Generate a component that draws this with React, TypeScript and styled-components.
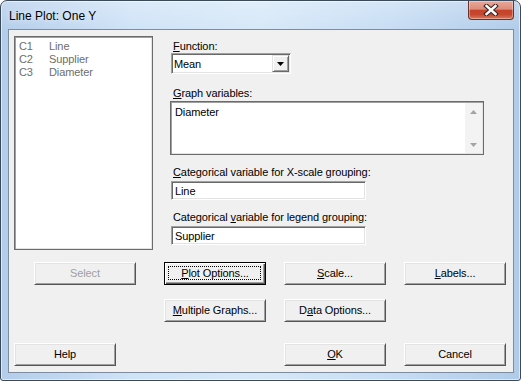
import React from "react";
import styled, { createGlobalStyle } from "styled-components";

const Global = createGlobalStyle`
  html, body { margin: 0; padding: 0; background: #ffffff; }
  * { box-sizing: border-box; }
`;

const Window = styled.div`
  width: 521px;
  height: 381px;
  display: flex;
  flex-direction: column;
  border: 1px solid #3b4a5a;
  border-radius: 7px 7px 3px 3px;
  padding: 0 6px 7px 7px;
  background:
    linear-gradient(to bottom, rgba(255, 255, 255, 0.25), rgba(255, 255, 255, 0) 30px),
    linear-gradient(to right, #b3cdea 0%, #cfe3f7 25%, #d6e8f8 50%, #c7ddf4 75%, #b0cbe9 100%);
  box-shadow: inset 0 0 0 1px rgba(255, 255, 255, 0.55);
  font-family: "Liberation Sans", Arial, sans-serif;
  overflow: hidden;
`;

const TitleBar = styled.div`
  height: 28px;
  display: flex;
  align-items: flex-start;
  flex: none;
`;

const Title = styled.div`
  padding: 7px 0 0 1px;
  font-family: "Liberation Sans", Arial, sans-serif;
  font-size: 12px;
  line-height: 16px;
  color: #000000;
  text-shadow: 0 0 6px rgba(255, 255, 255, 0.9);
`;

const CloseButton = styled.div`
  margin-left: auto;
  width: 46px;
  height: 19px;
  border: 1px solid #6a3228;
  border-top: none;
  border-radius: 0 0 4px 4px;
  background: linear-gradient(
    to bottom,
    #e9a899 0%,
    #dd8c7a 45%,
    #c5442b 52%,
    #c6482e 75%,
    #d97a5d 100%
  );
  box-shadow: inset 0 0 0 1px rgba(255, 255, 255, 0.35);
  display: flex;
  align-items: center;
  justify-content: center;
`;

const Client = styled.div`
  flex: 1;
  border: 1px solid #7d8da0;
  background: #f0f0f0;
  padding: 6px 7px 0 5px;
  display: flex;
  flex-direction: column;
  font-size: 11px;
  letter-spacing: -0.1px;
  color: #000000;
`;

const TopSection = styled.div`
  display: flex;
  align-items: flex-start;
`;

const ListBox = styled.div`
  width: 139px;
  height: 214px;
  background: #ffffff;
  border: 1px solid #6b6b6b;
  box-shadow: inset 1px 1px 0 #a0a0a0, inset -1px -1px 0 #e3e3e3;
  padding: 3px 0 0 4px;
`;

const ListItem = styled.div`
  display: grid;
  grid-template-columns: 30px 1fr;
  line-height: 13px;
  color: #6d6d6d;
`;

const RightColumn = styled.div`
  margin-left: 17px;
  display: flex;
  flex-direction: column;
`;

const FieldLabel = styled.div<{ $top: number }>`
  margin-top: ${(p) => p.$top}px;
  padding-left: 3px;
  line-height: 13px;
  white-space: nowrap;
`;

const Key = styled.span`
  text-decoration: underline;
  text-underline-offset: 1px;
`;

const Combo = styled.div`
  margin-left: 1px;
  width: 120px;
  height: 21px;
  background: #ffffff;
  border: 1px solid;
  border-color: #a0a0a0 #ffffff #ffffff #a0a0a0;
  box-shadow: inset 1px 1px 0 #696969, inset -1px -1px 0 #e3e3e3;
  padding: 1px;
  display: flex;
  align-items: stretch;
`;

const ComboText = styled.div`
  flex: 1;
  padding-left: 1px;
  display: flex;
  align-items: center;
`;

const ComboArrow = styled.div`
  width: 17px;
  background: #f0f0f0;
  border: 1px solid;
  border-color: #e3e3e3 #696969 #696969 #e3e3e3;
  box-shadow: inset 1px 1px 0 #ffffff, inset -1px -1px 0 #a0a0a0;
  display: flex;
  align-items: center;
  justify-content: center;
`;

const GraphBox = styled.div`
  margin-top: 1px;
  width: 314px;
  height: 54px;
  background: #ffffff;
  border: 1px solid #6b6b6b;
  box-shadow: inset 1px 1px 0 #a0a0a0, inset -1px -1px 0 #e3e3e3;
  padding: 1px;
  display: flex;
`;

const GraphText = styled.div`
  flex: 1;
  padding: 3px 0 0 3px;
  line-height: 13px;
`;

const ScrollBar = styled.div`
  width: 17px;
  background: #f3f3f3;
  display: flex;
  flex-direction: column;
  justify-content: space-between;
`;

const ScrollArrow = styled.div`
  height: 17px;
  display: flex;
  align-items: center;
  justify-content: center;
`;

const TextBox = styled.div`
  margin-top: 2px;
  margin-left: 1px;
  width: 195px;
  height: 19px;
  background: #ffffff;
  border: 1px solid;
  border-color: #a0a0a0 #ffffff #ffffff #a0a0a0;
  box-shadow: inset 1px 1px 0 #696969, inset -1px -1px 0 #e3e3e3;
  padding-left: 3px;
  display: flex;
  align-items: center;
`;

const ButtonRow = styled.div<{ $top: number; $indent: number }>`
  margin-top: ${(p) => p.$top}px;
  padding-left: ${(p) => p.$indent}px;
  display: flex;
  align-items: center;
  gap: 18px;
`;

const SpreadRow = styled.div<{ $top: number }>`
  margin-top: ${(p) => p.$top}px;
  display: flex;
  justify-content: space-between;
`;

const ButtonGroup = styled.div<{ $lead?: number }>`
  display: flex;
  gap: 18px;
  margin-left: ${(p) => p.$lead ?? 0}px;
`;

const Button = styled.div<{ $disabled?: boolean; $default?: boolean }>`
  position: relative;
  width: 102px;
  height: 23px;
  background: #f0f0f0;
  border: 1px solid;
  border-color: ${(p) => (p.$default ? "#000000" : "#ffffff #555555 #555555 #ffffff")};
  box-shadow: ${(p) =>
    p.$default
      ? "inset 1px 1px 0 #ffffff, inset -1px -1px 0 #555555, inset -2px -2px 0 #a0a0a0"
      : "inset 1px 1px 0 #e3e3e3, inset -1px -1px 0 #a0a0a0"};
  color: ${(p) => (p.$disabled ? "#a0a0a0" : "#000000")};
  display: flex;
  align-items: center;
  justify-content: center;
  line-height: 13px;
  white-space: nowrap;
`;

const FocusRing = styled.span`
  position: absolute;
  left: 3px;
  top: 3px;
  right: 4px;
  bottom: 4px;
  border: 1px dotted #000000;
  pointer-events: none;
`;

const Triangle = ({ dir, color }: { dir: "up" | "down"; color: string }) => (
  <svg width="7" height="4" viewBox="0 0 7 4">
    {dir === "down" ? (
      <polygon points="0,0 7,0 3.5,4" fill={color} />
    ) : (
      <polygon points="0,4 7,4 3.5,0" fill={color} />
    )}
  </svg>
);

const CloseGlyph = () => (
  <svg width="16" height="12" viewBox="0 0 16 12">
    <path d="M3.5 2 L12.5 10 M12.5 2 L3.5 10" stroke="#3b2a28" strokeWidth="4.6" strokeLinecap="square" />
    <path d="M3.5 2 L12.5 10 M12.5 2 L3.5 10" stroke="#ffffff" strokeWidth="2.4" strokeLinecap="square" />
  </svg>
);

const columns = [
  { id: "C1", name: "Line" },
  { id: "C2", name: "Supplier" },
  { id: "C3", name: "Diameter" },
];

export default function App() {
  return (
    <>
      <Global />
      <Window>
        <TitleBar>
          <Title>Line Plot: One Y</Title>
          <CloseButton>
            <CloseGlyph />
          </CloseButton>
        </TitleBar>
        <Client>
          <TopSection>
            <ListBox>
              {columns.map((c) => (
                <ListItem key={c.id}>
                  <span>{c.id}</span>
                  <span>{c.name}</span>
                </ListItem>
              ))}
            </ListBox>
            <RightColumn>
              <FieldLabel $top={4}>
                <Key>F</Key>unction:
              </FieldLabel>
              <Combo>
                <ComboText>Mean</ComboText>
                <ComboArrow>
                  <Triangle dir="down" color="#000000" />
                </ComboArrow>
              </Combo>
              <FieldLabel $top={13}>
                <Key>G</Key>raph variables:
              </FieldLabel>
              <GraphBox>
                <GraphText>Diameter</GraphText>
                <ScrollBar>
                  <ScrollArrow>
                    <Triangle dir="up" color="#a3a3a3" />
                  </ScrollArrow>
                  <ScrollArrow>
                    <Triangle dir="down" color="#a3a3a3" />
                  </ScrollArrow>
                </ScrollBar>
              </GraphBox>
              <FieldLabel $top={11}>
                <Key>C</Key>ategorical variable for X-scale grouping:
              </FieldLabel>
              <TextBox>Line</TextBox>
              <FieldLabel $top={11}>
                Categorical <Key>v</Key>ariable for legend grouping:
              </FieldLabel>
              <TextBox>Supplier</TextBox>
            </RightColumn>
          </TopSection>

          <ButtonRow $top={12} $indent={20}>
            <Button $disabled>Select</Button>
            <ButtonGroup $lead={10}>
              <Button $default>
                <span>
                  <Key>P</Key>lot Options...
                </span>
                <FocusRing />
              </Button>
              <Button>
                <span>
                  <Key>S</Key>cale...
                </span>
              </Button>
              <Button>
                <span>
                  <Key>L</Key>abels...
                </span>
              </Button>
            </ButtonGroup>
          </ButtonRow>

          <ButtonRow $top={14} $indent={150}>
            <Button>
              <span>
                <Key>M</Key>ultiple Graphs...
              </span>
            </Button>
            <Button>
              <span>
                D<Key>a</Key>ta Options...
              </span>
            </Button>
          </ButtonRow>

          <SpreadRow $top={21}>
            <Button>Help</Button>
            <ButtonGroup>
              <Button>
                <span>
                  <Key>O</Key>K
                </span>
              </Button>
              <Button>Cancel</Button>
            </ButtonGroup>
          </SpreadRow>
        </Client>
      </Window>
    </>
  );
}
